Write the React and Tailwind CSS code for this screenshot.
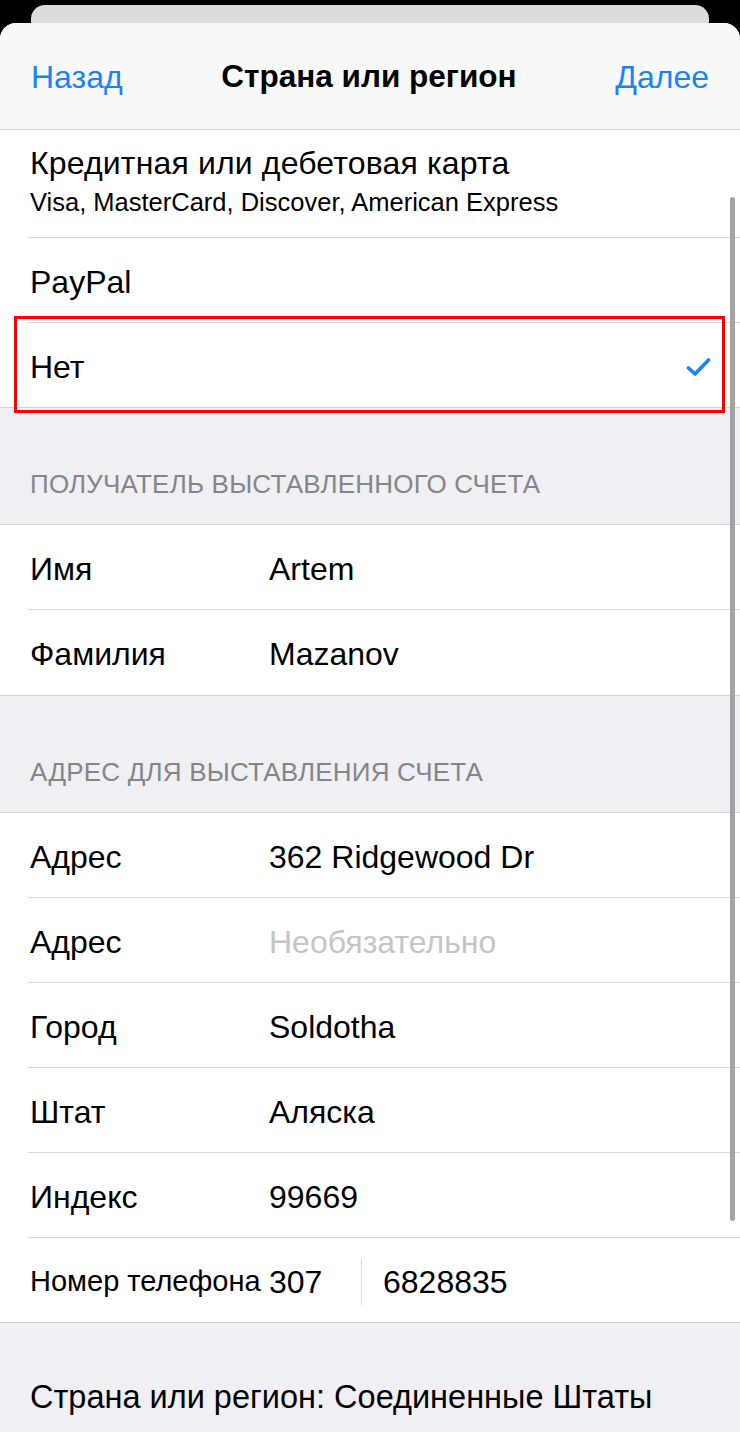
import React from 'react';

const font = { fontFamily: '"Liberation Sans", Arial, sans-serif' };

const Row = ({ label, value, placeholder, last }) => (
  <div className="relative h-[85px] bg-white flex items-center pl-[30px] pt-[3px]">
    <span className="w-[239px] text-[32px] text-black">{label}</span>
    {value ? (
      <span className="text-[32px] text-black">{value}</span>
    ) : (
      <span className="text-[32px] text-[#c4c4c7]">{placeholder}</span>
    )}
    {!last && <div className="absolute left-[28px] right-0 bottom-0 h-px bg-[#d9d9dc]" />}
  </div>
);

const SectionHeader = ({ children }) => (
  <div className="h-[117px] bg-[#efeff4] border-b border-[#d3d3d6] flex items-end pl-[30px] pb-[20px]">
    <span className="text-[26px] text-[#858589] tracking-[0.2px]">{children}</span>
  </div>
);

export default function App() {
  return (
    <div className="relative w-[740px] h-[1432px] bg-black overflow-hidden" style={font}>
      {/* card behind */}
      <div className="mx-[31px] mt-[5px] h-[30px] bg-[#dcdcdc] rounded-t-[14px]" />

      <div className="absolute left-0 right-0 top-[23px] bottom-0 bg-[#efeff4] rounded-t-[16px] overflow-hidden">
        {/* nav */}
        <div className="h-[107px] bg-[#f8f8f8] border-b border-[#d3d3d6] flex items-center justify-between px-[31px] pt-[2px]">
          <span className="text-[32px] text-[#1a82fb]">Назад</span>
          <span className="text-[31.5px] font-bold text-black">Страна или регион</span>
          <span className="text-[32px] text-[#1a82fb]">Далее</span>
        </div>

        {/* payment */}
        <div className="relative h-[108px] bg-white flex flex-col justify-center pl-[30px] pb-[4px]">
          <span className="text-[32px] text-black leading-[40px] tracking-[0.15px]">Кредитная или дебетовая карта</span>
          <span className="text-[25.5px] text-black leading-[38px]">Visa, MasterCard, Discover, American Express</span>
          <div className="absolute left-[28px] right-0 bottom-0 h-px bg-[#d9d9dc]" />
        </div>
        <div className="relative h-[85px] bg-white flex items-center pl-[30px] pt-[3px]">
          <span className="text-[32px] text-black">PayPal</span>
          <div className="absolute left-[28px] right-0 bottom-0 h-px bg-[#d9d9dc]" />
        </div>
        <div className="h-[85px] bg-white flex items-center justify-between pl-[30px] pr-[29px] pt-[3px] border-b border-[#d3d3d6]">
          <span className="text-[32px] text-black">Нет</span>
          <svg width="25" height="20" viewBox="0 0 25 20" fill="none">
            <path d="M2.5 11 L9 17 L22.5 3" stroke="#1a82fb" strokeWidth="3.6" strokeLinecap="round" strokeLinejoin="round" />
          </svg>
        </div>

        <SectionHeader>ПОЛУЧАТЕЛЬ ВЫСТАВЛЕННОГО СЧЕТА</SectionHeader>
        <Row label="Имя" value="Artem" />
        <Row label="Фамилия" value="Mazanov" last />
        <div className="border-b border-[#d3d3d6]" />

        <SectionHeader>АДРЕС ДЛЯ ВЫСТАВЛЕНИЯ СЧЕТА</SectionHeader>
        <Row label="Адрес" value="362 Ridgewood Dr" />
        <Row label="Адрес" placeholder="Необязательно" />
        <Row label="Город" value="Soldotha" />
        <Row label="Штат" value="Аляска" />
        <Row label="Индекс" value="99669" />
        <div className="h-[85px] bg-white flex items-center pl-[30px] pt-[3px] border-b border-[#d3d3d6]">
          <span className="w-[239px] text-[29px] text-black whitespace-nowrap">Номер телефона</span>
          <span className="w-[92px] text-[32px] text-black">307</span>
          <div className="w-px h-[46px] bg-[#d9d9dc]" />
          <span className="ml-[21px] text-[32px] text-black">6828835</span>
        </div>

        <div className="pl-[30px] pt-[50px]">
          <span className="text-[32.5px] text-black">Страна или регион: Соединенные Штаты</span>
        </div>
      </div>

      {/* scroll indicator */}
      <div className="absolute right-[5px] top-[197px] w-[5px] h-[1024px] rounded-full bg-[#a3a3a6]" />

      {/* highlight */}
      <div className="absolute left-[14px] top-[316px] w-[711px] h-[97px] border-[3px] border-[#ff0000]" />
    </div>
  );
}
